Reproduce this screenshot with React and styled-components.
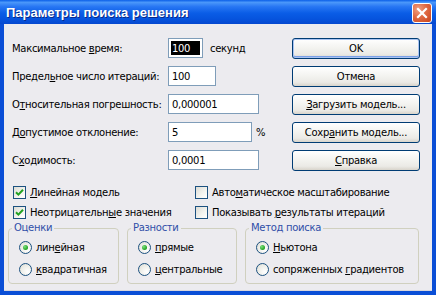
import React from "react";
import styled, { createGlobalStyle, css } from "styled-components";

const GlobalStyle = createGlobalStyle`
  html, body { margin: 0; padding: 0; background: #ffffff; }
  body { font-family: "DejaVu Sans", Verdana, sans-serif; font-size: 10px; letter-spacing: -0.3px; }
  * { box-sizing: border-box; }
`;

const Window = styled.div`
  width: 436px;
  height: 295px;
  display: flex;
  flex-direction: column;
  overflow: hidden;
  background: #0a4ed6;
`;

const TitleBar = styled.div`
  height: 24px;
  display: flex;
  align-items: center;
  justify-content: space-between;
  padding: 0 4px 0 6px;
  background: linear-gradient(180deg, #0a5fe8 0%, #4a97fa 10%, #2776f3 28%, #0a5de6 55%, #0653dd 80%, #0548cf 100%);
`;

const Title = styled.div`
  color: #ffffff;
  font-family: "Liberation Sans", Arial, sans-serif;
  font-weight: bold;
  font-size: 13px;
  letter-spacing: 0;
  text-shadow: 1px 1px 0 #0a2a8a;
`;

const CloseButton = styled.div`
  width: 20px;
  height: 20px;
  margin-top: 1px;
  border: 1px solid #ffffff;
  border-radius: 3px;
  background: radial-gradient(circle at 30% 30%, #f0a083 0%, #e06a44 45%, #c8431c 100%);
  display: flex;
  align-items: center;
  justify-content: center;
`;

const Body = styled.div`
  flex: 1;
  margin: 0 4px 4px 4px;
  background: #ecebef;
  display: flex;
  flex-direction: column;
  border-bottom: 1px solid #d8d6dd;
`;

const Top = styled.div`
  display: flex;
  padding: 10px 12px 0 8px;
`;

const Form = styled.div`
  display: flex;
  flex-direction: column;
  width: 280px;
`;

const Row = styled.div`
  height: 28px;
  display: flex;
  align-items: center;
`;

const Label = styled.div`
  width: 156px;
  color: #000;
  white-space: nowrap;
`;

const Field = styled.div`
  width: ${(p) => p.$w}px;
  height: 20px;
  border: 1px solid #7f9db9;
  background: #ffffff;
  color: #000;
  display: flex;
  align-items: center;
  padding-left: 3px;
  ${(p) =>
    p.$selected &&
    css`
      padding: 2px;
    `}
`;

const Selection = styled.span`
  flex: 1;
  align-self: stretch;
  background: #000000;
  color: #ffffff;
  display: flex;
  align-items: center;
  padding-left: 1px;
`;

const Unit = styled.span`
  margin-left: ${(p) => p.$gap || 6}px;
  color: #000;
`;

const Buttons = styled.div`
  display: flex;
  flex-direction: column;
  margin-left: auto;
`;

const ButtonSlot = styled.div`
  height: 28px;
  display: flex;
  align-items: center;
`;

const Button = styled.div`
  width: 128px;
  height: 21px;
  border: 1px solid #003c74;
  border-radius: 3px;
  background: linear-gradient(180deg, #ffffff 0%, #f5f5f2 40%, #ebeae6 80%, #d8d4cb 100%);
  display: flex;
  align-items: center;
  justify-content: center;
  color: #000;
  ${(p) =>
    p.$default &&
    css`
      box-shadow: inset 0 0 0 1px #a9c3f2, inset 0 -1px 0 1px #7aa0e8;
    `}
`;

const Checks = styled.div`
  display: grid;
  grid-template-columns: 182px 1fr;
  padding: 8px 0 0 9px;
`;

const CheckRow = styled.div`
  height: 20px;
  display: flex;
  align-items: center;
  gap: 4px;
  white-space: nowrap;
`;

const Box = styled.span`
  width: 13px;
  height: 13px;
  border: 1px solid #1c5180;
  background: linear-gradient(135deg, #dcdcd5 0%, #f4f4f0 60%, #ffffff 100%);
  display: inline-flex;
  align-items: center;
  justify-content: center;
  flex: none;
`;

const Groups = styled.div`
  display: flex;
  gap: 8px;
  padding: 0 0 0 4px;
`;

const Group = styled.fieldset`
  width: ${(p) => p.$w}px;
  margin: 0;
  padding: 2px 0 3px 10px;
  border: 1px solid #d0d0bf;
  border-radius: 4px;
  min-width: 0;
`;

const Legend = styled.legend`
  color: #2f4fa8;
  padding: 0 2px;
  margin-left: -7px;
  line-height: 12px;
`;

const RadioRow = styled.div`
  height: 22px;
  display: flex;
  align-items: center;
  gap: 4px;
  white-space: nowrap;
`;

const Radio = styled.span`
  width: 13px;
  height: 13px;
  border-radius: 50%;
  border: 1px solid #1c5180;
  background: radial-gradient(circle at 70% 70%, #ffffff 0%, #ececE6 60%, #d6d6ce 100%);
  display: inline-flex;
  align-items: center;
  justify-content: center;
  flex: none;
`;

const Dot = styled.span`
  width: 5px;
  height: 5px;
  border-radius: 50%;
  background: radial-gradient(circle at 35% 35%, #7be07b 0%, #21a121 70%);
`;

const Check = () => (
  <svg width="9" height="9" viewBox="0 0 9 9">
    <path d="M1 4.2 L3.4 6.6 L8 1.8" stroke="#21a121" strokeWidth="2" fill="none" />
  </svg>
);

function CheckBox({ checked, children }) {
  return (
    <CheckRow>
      <Box>{checked && <Check />}</Box>
      <span>{children}</span>
    </CheckRow>
  );
}

function RadioItem({ checked, children }) {
  return (
    <RadioRow>
      <Radio>{checked && <Dot />}</Radio>
      <span>{children}</span>
    </RadioRow>
  );
}

export default function App() {
  return (
    <>
      <GlobalStyle />
      <Window>
        <TitleBar>
          <Title>Параметры поиска решения</Title>
          <CloseButton>
            <svg width="12" height="12" viewBox="0 0 12 12">
              <path d="M2 2 L10 10 M10 2 L2 10" stroke="#ffffff" strokeWidth="2.2" strokeLinecap="square" />
            </svg>
          </CloseButton>
        </TitleBar>
        <Body>
          <Top>
            <Form>
              <Row>
                <Label>Максимальное <u>в</u>ремя:</Label>
                <Field $w={35} $selected><Selection>100</Selection></Field>
                <Unit $gap={7}>секунд</Unit>
              </Row>
              <Row>
                <Label>Предел<u>ь</u>ное число итераций:</Label>
                <Field $w={48}>100</Field>
              </Row>
              <Row>
                <Label>О<u>т</u>носительная погрешность:</Label>
                <Field $w={91}>0,000001</Field>
              </Row>
              <Row>
                <Label>Д<u>о</u>пустимое отклонение:</Label>
                <Field $w={84}>5</Field>
                <Unit $gap={4}>%</Unit>
              </Row>
              <Row>
                <Label>С<u>х</u>одимость:</Label>
                <Field $w={91}>0,0001</Field>
              </Row>
            </Form>
            <Buttons>
              <ButtonSlot><Button $default>OK</Button></ButtonSlot>
              <ButtonSlot><Button>Отмена</Button></ButtonSlot>
              <ButtonSlot><Button><u>З</u>агрузить модель...</Button></ButtonSlot>
              <ButtonSlot><Button>Сохр<u>а</u>нить модель...</Button></ButtonSlot>
              <ButtonSlot><Button><u>С</u>правка</Button></ButtonSlot>
            </Buttons>
          </Top>
          <Checks>
            <CheckBox checked><u>Л</u>инейная модель</CheckBox>
            <CheckBox>Авто<u>м</u>атическое масштабирование</CheckBox>
            <CheckBox checked>Неотрицательн<u>ы</u>е значения</CheckBox>
            <CheckBox>Показывать <u>р</u>езультаты итераций</CheckBox>
          </Checks>
          <Groups>
            <Group $w={111}>
              <Legend>Оценки</Legend>
              <RadioItem checked>лин<u>е</u>йная</RadioItem>
              <RadioItem><u>к</u>вадратичная</RadioItem>
            </Group>
            <Group $w={110}>
              <Legend>Разности</Legend>
              <RadioItem checked><u>п</u>рямые</RadioItem>
              <RadioItem><u>ц</u>ентральные</RadioItem>
            </Group>
            <Group $w={174}>
              <Legend>Метод поиска</Legend>
              <RadioItem checked><u>Н</u>ьютона</RadioItem>
              <RadioItem>сопряженных <u>г</u>радиентов</RadioItem>
            </Group>
          </Groups>
        </Body>
      </Window>
    </>
  );
}
